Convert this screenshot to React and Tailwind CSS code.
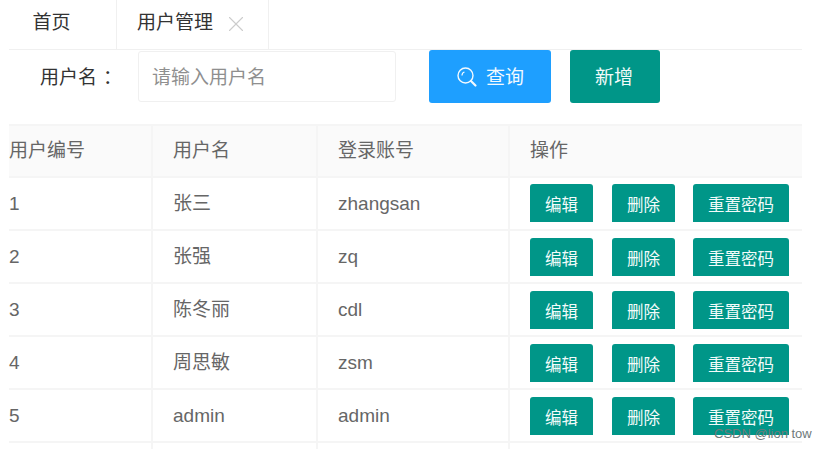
import { X } from 'lucide-react';

const users = [
  { id: 1, name: '张三', account: 'zhangsan' },
  { id: 2, name: '张强', account: 'zq' },
  { id: 3, name: '陈冬丽', account: 'cdl' },
  { id: 4, name: '周思敏', account: 'zsm' },
  { id: 5, name: 'admin', account: 'admin' },
];

function ActionButton({ width, children }) {
  return (
    <button className={`${width} h-[38px] shrink-0 rounded-t-[3px] bg-[#009688] pt-[2px] text-[16.5px] leading-[38px] text-[#f2fbfa]`}>
      {children}
    </button>
  );
}

function SearchIcon() {
  return (
    <svg className="mr-[8px] -mt-[2px]" width="22" height="22" viewBox="0 0 22 22" fill="none" stroke="currentColor">
      <circle cx="9.5" cy="9.5" r="7.5" strokeWidth="1.4" />
      <path d="M6 9.5a3.5 3.5 0 0 1 2.5-3.5" strokeWidth="1.2" />
      <path d="M15 15l4.5 4.5" strokeWidth="2.2" strokeLinecap="round" />
    </svg>
  );
}

function Row({ user, first }) {
  return (
    <div className="flex h-[53px] border-b-2 border-[#f5f5f5] text-[19px] text-[#666666]">
      <div className="flex w-[144px] items-center border-r-2 border-[#f5f5f5] pt-[2px]">{user.id}</div>
      <div className="flex w-[165px] items-center border-r-2 border-[#f5f5f5] pl-[20px] pt-[2px]">{user.name}</div>
      <div className="flex w-[192px] items-center border-r-2 border-[#f5f5f5] pl-[20px] pt-[2px]">{user.account}</div>
      <div className={`flex flex-1 items-start pl-[20px] ${first ? 'pt-[6px]' : 'pt-[7px]'}`}>
        <ActionButton width="w-[63px]">编辑</ActionButton>
        <div className="ml-[19px]"><ActionButton width="w-[63px]">删除</ActionButton></div>
        <div className="ml-[18px]"><ActionButton width="w-[96px]">重置密码</ActionButton></div>
      </div>
    </div>
  );
}

export default function App() {
  return (
    <div className="relative h-[449px] w-[828px] overflow-hidden bg-white pl-[9px] pr-[26px] font-['Liberation_Sans','Noto_Sans_CJK_SC',sans-serif]">
      {/* Tabs */}
      <div className="flex h-[50px] border-b border-[#f0f0f0] text-[19px] text-[#333333]">
        <div className="flex w-[108px] items-center justify-center border-r border-[#f0f0f0] pb-[2px] pr-[22px]">首页</div>
        <div className="flex w-[152px] items-center border-r border-[#f0f0f0] pb-[2px] pl-[20px]">
          用户管理
          <X className="ml-[10px] mt-[1px] text-[#cccccc]" size={26} strokeWidth={1} />
        </div>
      </div>

      {/* Search */}
      <div className="flex h-[74px] items-start">
        <label className="flex w-[129px] pl-[31px] pt-[15px] text-[19px] leading-[25px] text-[#333333]">
          用户名<span className="ml-[6px]">：</span>
        </label>
        <div className="mt-[1px] flex h-[51px] w-[258px] items-center rounded-[3px] border border-[#f0f0f0] pl-[13px] pt-[3px] text-[19px] text-[#8f8f8f]">
          请输入用户名
        </div>
        <button className="ml-[33px] flex h-[53px] w-[122px] items-center justify-center rounded-[3px] bg-[#1e9fff] pt-[3px] text-[19px] text-[#f2f9ff]">
          <SearchIcon />
          查询
        </button>
        <button className="ml-[19px] h-[53px] w-[90px] rounded-[3px] bg-[#009688] pr-[2px] pt-[4px] text-[19px] text-[#f2fbfa]">新增</button>
      </div>

      {/* Table */}
      <div className="border-t-2 border-[#f5f5f5]">
        <div className="flex h-[52px] border-b-2 border-[#f5f5f5] bg-[#fafafa] text-[19px] text-[#666666]">
          <div className="flex w-[144px] items-center border-r-2 border-[#f5f5f5]">用户编号</div>
          <div className="flex w-[165px] items-center border-r-2 border-[#f5f5f5] pl-[20px]">用户名</div>
          <div className="flex w-[192px] items-center border-r-2 border-[#f5f5f5] pl-[20px]">登录账号</div>
          <div className="flex flex-1 items-center pl-[20px]">操作</div>
        </div>
        {users.map((user, i) => (
          <Row key={user.id} user={user} first={i === 0} />
        ))}
        <div className="flex h-[10px]">
          <div className="w-[144px] border-r-2 border-[#f5f5f5]" />
          <div className="w-[165px] border-r-2 border-[#f5f5f5]" />
          <div className="w-[192px] border-r-2 border-[#f5f5f5]" />
        </div>
      </div>

      {/* Watermark */}
      <span className="absolute left-[714px] top-[426px] text-[13px] leading-[16px] text-[#6f7a7a]">CSDN @lion tow</span>
    </div>
  );
}
